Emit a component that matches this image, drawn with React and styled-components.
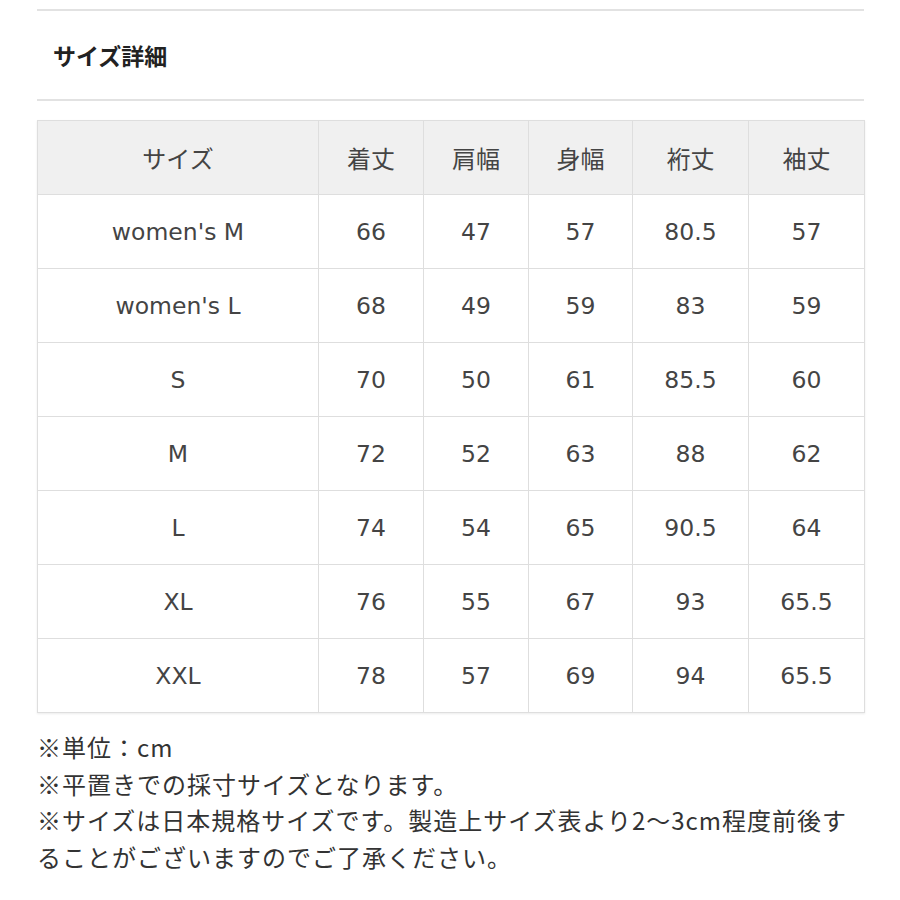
import React from "react";
import styled, { createGlobalStyle } from "styled-components";

const GlobalStyle = createGlobalStyle`
  body {
    margin: 0;
    background: #fff;
    font-family: "DejaVu Sans", "Noto Sans CJK JP", sans-serif;
  }
`;

const Wrapper = styled.div`
  width: 827px;
  padding: 9px 0 0 37px;
`;

const TitleBar = styled.div`
  border-top: 2px solid #e2e2e2;
  border-bottom: 2px solid #e2e2e2;
  height: 88px;
  display: flex;
  align-items: center;
  padding-left: 16px;
`;

const Title = styled.h2`
  margin: 0;
  font-family: "Noto Sans CJK JP", sans-serif;
  font-size: 23px;
  font-weight: 700;
  color: #222;
`;

const Table = styled.table`
  margin-top: 19px;
  width: 828px;
  border-collapse: collapse;
  table-layout: fixed;
  box-shadow: 0 1px 2px rgba(0, 0, 0, 0.08);
`;

const HeadCell = styled.th`
  background: #f0f0f0;
  border: 1px solid #dedede;
  height: 73px;
  font-family: "Noto Sans CJK JP", sans-serif;
  font-weight: 400;
  font-size: 24px;
  color: #444;
  text-align: center;
  padding: 0;
`;

const Cell = styled.td`
  border: 1px solid #dedede;
  height: 73px;
  font-family: "DejaVu Sans", "Noto Sans CJK JP", sans-serif;
  font-size: 23.5px;
  color: #444;
  text-align: center;
  padding: 0;
`;

const Notes = styled.div`
  margin-top: 16px;
  font-family: "Noto Sans CJK JP", sans-serif;
  font-size: 24px;
  line-height: 36.5px;
  color: #333;
  width: 820px;
  letter-spacing: 1px;
`;

const Line = styled.p`
  margin: 0;
`;

const cols = [
  { label: "サイズ", width: 281 },
  { label: "着丈", width: 105 },
  { label: "肩幅", width: 105 },
  { label: "身幅", width: 104 },
  { label: "裄丈", width: 116 },
  { label: "袖丈", width: 116 },
];

const rows = [
  ["women's M", "66", "47", "57", "80.5", "57"],
  ["women's L", "68", "49", "59", "83", "59"],
  ["S", "70", "50", "61", "85.5", "60"],
  ["M", "72", "52", "63", "88", "62"],
  ["L", "74", "54", "65", "90.5", "64"],
  ["XL", "76", "55", "67", "93", "65.5"],
  ["XXL", "78", "57", "69", "94", "65.5"],
];

const App = () => {
  return (
    <>
      <GlobalStyle />
      <Wrapper>
        <TitleBar>
          <Title>サイズ詳細</Title>
        </TitleBar>
        <Table>
          <colgroup>
            {cols.map((c) => (
              <col key={c.label} style={{ width: `${c.width}px` }} />
            ))}
          </colgroup>
          <thead>
            <tr>
              {cols.map((c) => (
                <HeadCell key={c.label}>{c.label}</HeadCell>
              ))}
            </tr>
          </thead>
          <tbody>
            {rows.map((r) => (
              <tr key={r[0]}>
                {r.map((v, i) => (
                  <Cell key={i}>{v}</Cell>
                ))}
              </tr>
            ))}
          </tbody>
        </Table>
        <Notes>
          <Line>※単位：cm</Line>
          <Line>※平置きでの採寸サイズとなります。</Line>
          <Line>
            ※サイズは日本規格サイズです。製造上サイズ表より2〜3cm程度前後することがございますのでご了承ください。
          </Line>
        </Notes>
      </Wrapper>
    </>
  );
};

export default App;
